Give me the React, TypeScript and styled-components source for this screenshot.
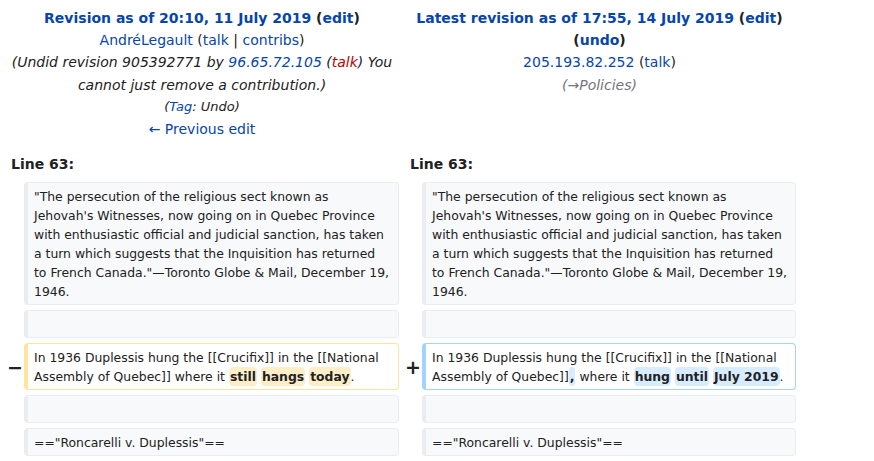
import React from "react";
import styled, { createGlobalStyle } from "styled-components";

const GlobalStyle = createGlobalStyle`
  html, body { margin: 0; padding: 0; background: #ffffff; }
  body {
    font-family: "DejaVu Sans", "Liberation Sans", sans-serif;
    color: #202122;
  }
`;

const DiffGrid = styled.div`
  display: grid;
  grid-template-columns: 15px 375px 15px 374px;
  column-gap: 4px;
  row-gap: 5px;
  padding: 7px 0 0 5px;
  width: 800px;
  box-sizing: border-box;
`;

const HeaderCell = styled.div`
  grid-column: span 2;
  text-align: center;
  font-size: 14px;
  line-height: 22.2px;
`;

const HeaderLine = styled.div<{ $italic?: boolean; $muted?: boolean; $small?: boolean }>`
  font-style: ${(p) => (p.$italic ? "italic" : "normal")};
  color: ${(p) => (p.$muted ? "#72777d" : "#202122")};
  font-size: ${(p) => (p.$small ? "13px" : "14px")};
`;

const Title = styled.div`
  font-weight: bold;
`;

const Link = styled.a<{ $red?: boolean; $muted?: boolean }>`
  color: ${(p) => (p.$red ? "#ba0000" : p.$muted ? "#72777d" : "#0645ad")};
  text-decoration: none;
`;

const LineNo = styled.div<{ $right?: boolean }>`
  grid-column: span 2;
  font-weight: bold;
  font-size: 14px;
  line-height: 22px;
  padding: 8px 0 2px ${(p) => (p.$right ? "7px" : "6px")};
`;

const Marker = styled.div`
  display: flex;
  align-items: center;
  justify-content: center;
  padding-left: 5px;
  font-weight: bold;
  font-size: 19px;
  color: #202122;
`;

const Cell = styled.div<{ $kind: "context" | "deleted" | "added" }>`
  box-sizing: border-box;
  min-height: 28px;
  font-size: 12.4px;
  line-height: 19px;
  padding: 3.5px 7px 3.5px 6px;
  border-style: solid;
  border-width: 1px 1px 1px 4px;
  border-radius: 4px;
  background: ${(p) => (p.$kind === "context" ? "#f8f9fa" : "#ffffff")};
  border-color: ${(p) =>
    p.$kind === "deleted" ? "#ffe49c" : p.$kind === "added" ? "#a3d3ff" : "#eaecf0"};
  white-space: pre-wrap;
  word-wrap: break-word;
`;

const Change = styled.span<{ $kind: "deleted" | "added" }>`
  font-weight: bold;
  border-radius: 4px;
  padding: 2px 1px;
  background: ${(p) => (p.$kind === "deleted" ? "#feeec8" : "#d8ecff")};
`;

const quote =
  "\"The persecution of the religious sect known as Jehovah's Witnesses, now going on in Quebec Province with enthusiastic official and judicial sanction, has taken a turn which suggests that the Inquisition has returned to French Canada.\"—Toronto Globe & Mail, December 19, 1946.";

export default function App() {
  return (
    <>
      <GlobalStyle />
      <DiffGrid>
        <HeaderCell>
          <Title>
            <Link href="#">Revision as of 20:10, 11 July 2019</Link> (<Link href="#">edit</Link>)
          </Title>
          <HeaderLine>
            <Link href="#">AndréLegault</Link> (<Link href="#">talk</Link> | <Link href="#">contribs</Link>)
          </HeaderLine>
          <HeaderLine $italic>
            (Undid revision 905392771 by <Link href="#">96.65.72.105</Link> (<Link href="#" $red>talk</Link>) You cannot just remove a contribution.)
          </HeaderLine>
          <HeaderLine $italic $small>
            (<Link href="#">Tag</Link>: Undo)
          </HeaderLine>
          <HeaderLine>
            <Link href="#">← Previous edit</Link>
          </HeaderLine>
        </HeaderCell>
        <HeaderCell>
          <Title>
            <Link href="#">Latest revision as of 17:55, 14 July 2019</Link> (<Link href="#">edit</Link>)
          </Title>
          <Title>
            (<Link href="#">undo</Link>)
          </Title>
          <HeaderLine>
            <Link href="#">205.193.82.252</Link> (<Link href="#">talk</Link>)
          </HeaderLine>
          <HeaderLine $italic $muted>
            (<Link href="#" $muted>→Policies</Link>)
          </HeaderLine>
        </HeaderCell>

        <LineNo>Line 63:</LineNo>
        <LineNo $right>Line 63:</LineNo>

        <Marker />
        <Cell $kind="context">{quote}</Cell>
        <Marker />
        <Cell $kind="context">{quote}</Cell>

        <Marker />
        <Cell $kind="context" />
        <Marker />
        <Cell $kind="context" />

        <Marker>−</Marker>
        <Cell $kind="deleted">
          In 1936 Duplessis hung the [[Crucifix]] in the [[National Assembly of Quebec]] where it{" "}
          <Change $kind="deleted">still</Change> <Change $kind="deleted">hangs</Change>{" "}
          <Change $kind="deleted">today</Change>.
        </Cell>
        <Marker>+</Marker>
        <Cell $kind="added">
          In 1936 Duplessis hung the [[Crucifix]] in the [[National Assembly of Quebec]]
          <Change $kind="added">,</Change> where it <Change $kind="added">hung</Change>{" "}
          <Change $kind="added">until</Change> <Change $kind="added">July 2019</Change>.
        </Cell>

        <Marker />
        <Cell $kind="context" />
        <Marker />
        <Cell $kind="context" />

        <Marker />
        <Cell $kind="context">=="Roncarelli v. Duplessis"==</Cell>
        <Marker />
        <Cell $kind="context">=="Roncarelli v. Duplessis"==</Cell>
      </DiffGrid>
    </>
  );
}
